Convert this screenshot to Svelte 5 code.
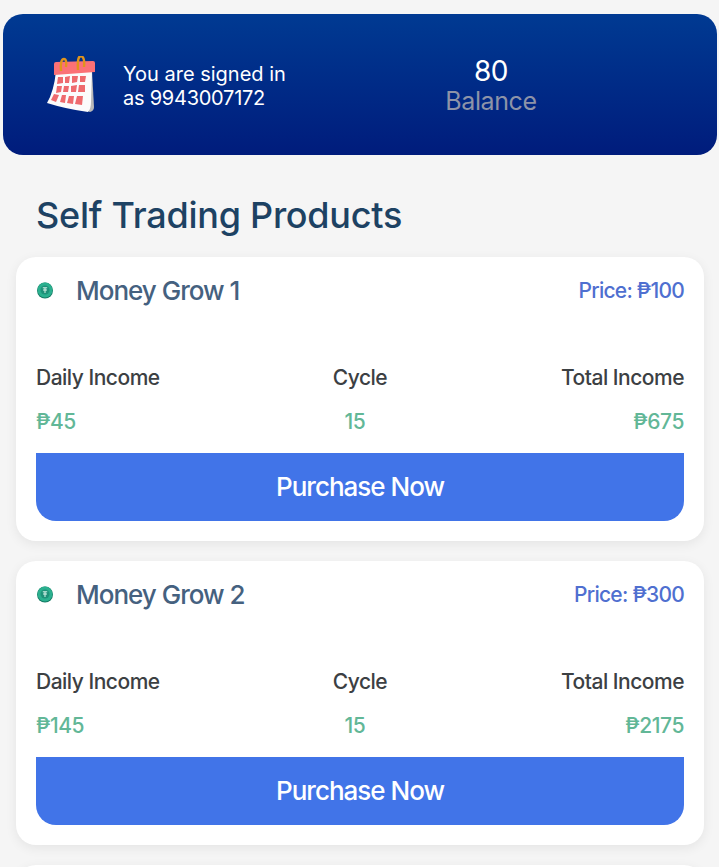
<script>
  const products = [
    { name: 'Money Grow 1', price: 100, daily: 45, cycle: 15, total: 675 },
    { name: 'Money Grow 2', price: 300, daily: 145, cycle: 15, total: 2175 },
  ];
</script>

<div class="page">
  <div class="banner">
    <div class="user">
      <!-- drawn on page coords, viewBox starts where the icon sits -->
      <svg class="calendar" width="49" height="57" viewBox="47 57 49 57">
        <path d="M92 72 L94 108 Q94 112 90 113 L80 109 Z" fill="#b9b9b9" />
        <path d="M56 72 L92 72 L91 103 Q91 110 88 113 Q66 110 47 104 Q54 92 56 72 Z" fill="#fbfbfb" />
        <path d="M54 65 Q54 63 56 63 L93 62 Q95 62 95 64 L95 73 L54 76 Z" fill="#fb7176" />
        <g fill="#ee6a6d">
          <path d="M58 78 L63 78 L63 84 L57 85 Z" />
          <path d="M65 78 L70 77 L69 84 L65 84 Z" />
          <path d="M72 77 L78 77 L77 83 L72 84 Z" />
          <path d="M80 77 L86 77 L85 83 L80 83 Z" />
          <path d="M57 87 L62 87 L61 93 L56 94 Z" />
          <path d="M64 87 L69 87 L68 93 L63 93 Z" />
          <path d="M71 87 L77 86 L76 93 L71 93 Z" />
          <path d="M79 86 L85 86 L85 93 L78 93 Z" />
          <path d="M54 95 L59 96 L56 103 L51 101 Z" />
          <path d="M62 96 L66 96 L65 104 L60 103 Z" />
          <path d="M69 97 L74 97 L73 105 L67 104 Z" />
          <path d="M77 97 L83 97 L82 106 L75 105 Z" />
        </g>
        <path d="M61 72 Q60 60 64 60 Q67 60 66 68" fill="none" stroke="#e0941c" stroke-width="2.400" />
        <path d="M78 71 Q77 57 81 57 Q85 58 84 68" fill="none" stroke="#e0941c" stroke-width="2.400" />
      </svg>
      <div class="signed">You are signed in<br /><span class="phone">as 9943007172</span></div>
    </div>
    <div class="balance">
      <div class="amount">80</div>
      <div class="label">Balance</div>
    </div>
  </div>

  <h1>Self Trading Products</h1>

  {#each products as p}
    <div class="card">
      <div class="head">
        <div class="title">
          <svg class="coin" width="18" height="18" viewBox="0 0 18 18">
            <circle cx="9" cy="9.500" r="8" fill="#157a63" />
            <circle cx="9" cy="9" r="7.500" fill="#2bb08f" />
            <circle cx="9" cy="9" r="4.500" fill="#1f9179" />
            <path d="M6.800 6.800 H11.200 M9 6.800 V12 M7 9 H11" stroke="#d9f3ea" stroke-width="1" fill="none" />
          </svg>
          <span class="name">{p.name}</span>
        </div>
        <span class="price">Price: ₱{p.price}</span>
      </div>
      <div class="stats">
        <div class="stat left"><span class="key">Daily Income</span><span class="val">₱{p.daily}</span></div>
        <div class="stat mid"><span class="key">Cycle</span><span class="val">{p.cycle}</span></div>
        <div class="stat right"><span class="key">Total Income</span><span class="val">₱{p.total}</span></div>
      </div>
      <button class="buy">Purchase Now</button>
    </div>
  {/each}
  <!-- next card only shows its top edge in the viewport -->
  <div class="card next"></div>
</div>

<style>
  :global(body) {
    margin: 0;
    background: #f5f5f5;
    font-family: Inter, "Noto Sans", sans-serif;
  }

  .page {
    height: 867px;
    overflow: hidden;
    padding-top: 14px;
    box-sizing: border-box;
  }

  .banner {
    height: 141px;
    margin: 0 2px 0 3px;
    border-radius: 20px;
    background: linear-gradient(180deg, #003a92, #001c7c);
    color: #fff;
    display: flex;
    align-items: center;
  }

  .user {
    width: 410px;
    display: flex;
    align-items: center;
    padding-left: 44px;
    box-sizing: border-box;
  }

  .calendar {
    margin-right: 27px;
    flex: none;
  }

  .signed {
    padding-top: 2px;
    font-size: 20px;
    line-height: 24px;
  }

  .phone {
    letter-spacing: -0.25px;
  }

  .balance {
    width: 156px;
    text-align: center;
  }

  .amount {
    font-size: 28px;
    line-height: 32px;
    letter-spacing: -0.5px;
  }

  .label {
    font-size: 25px;
    line-height: 28px;
    letter-spacing: -0.4px;
    color: #8d93a8;
  }

  h1 {
    margin: 0;
    padding: 38px 0 0 36px;
    height: 64px;
    font-size: 36px;
    line-height: 44px;
    font-weight: 500;
    letter-spacing: -0.25px;
    color: #1d4263;
  }

  .card {
    margin: 0 15px 20px 16px;
    padding: 20px;
    background: #fff;
    border-radius: 20px;
    box-shadow: 0 3px 12px rgba(0, 0, 0, 0.07);
  }

  .next {
    height: 100px;
  }

  .head {
    display: flex;
    justify-content: space-between;
    align-items: center;
    height: 26px;
  }

  .title {
    display: flex;
    align-items: center;
  }

  .coin {
    margin-right: 22px;
  }

  .name {
    font-size: 26px;
    font-weight: 450;
    letter-spacing: -1px;
    color: #45617f;
  }

  .price {
    font-size: 21px;
    font-weight: 500;
    letter-spacing: -0.75px;
    color: #4f6fd0;
  }

  .stats {
    display: flex;
    justify-content: space-between;
    margin-top: 62px;
    height: 88px;
  }

  .stat {
    display: flex;
    flex-direction: column;
    gap: 18px;
    width: 33.33%;
  }

  .mid { align-items: center; }
  .right { align-items: flex-end; }

  .mid .val {
    padding-right: 10px;
  }

  .key {
    font-size: 21px;
    font-weight: 450;
    line-height: 26px;
    letter-spacing: -0.5px;
    color: #3c4043;
  }

  .val {
    font-size: 21px;
    line-height: 26px;
    font-weight: 500;
    letter-spacing: -0.4px;
    color: #62b797;
  }

  .buy {
    display: block;
    width: 100%;
    height: 68px;
    padding: 0 0 2px;
    border: none;
    border-radius: 0 0 20px 20px;
    background: #4174e8;
    color: #fff;
    font-family: inherit;
    font-size: 26px;
    font-weight: 500;
    letter-spacing: -1px;
  }
</style>
